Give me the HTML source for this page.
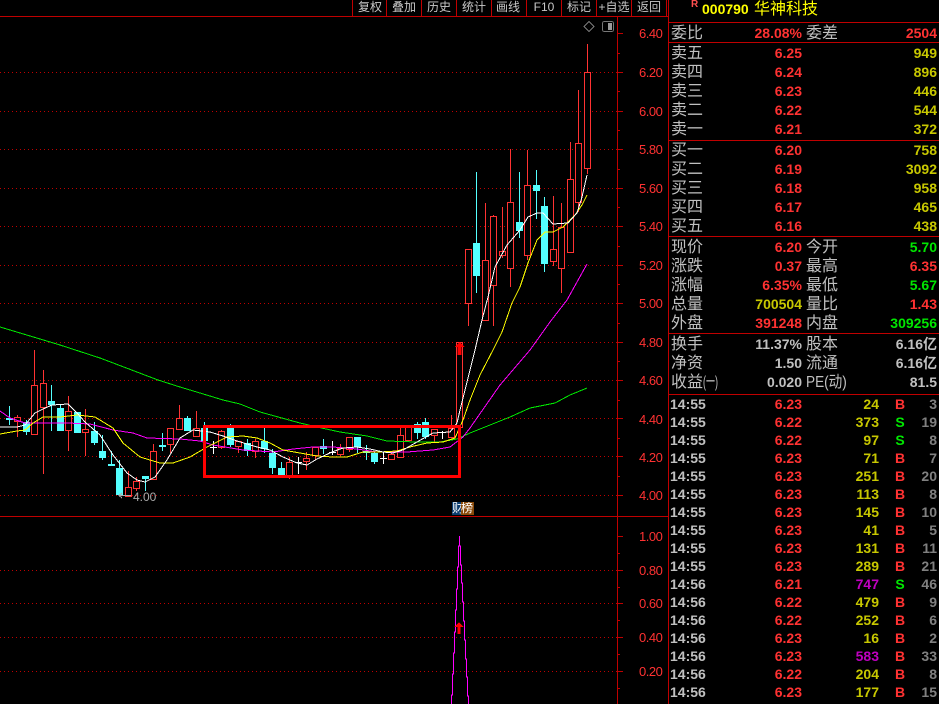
<!DOCTYPE html>
<html><head><meta charset="utf-8">
<style>
html,body{margin:0;padding:0;background:#000}
body{position:relative;width:939px;height:704px;overflow:hidden;font-family:"Liberation Sans","WenQuanYi Zen Hei","Noto Sans CJK SC",sans-serif}
svg{position:absolute;left:0;top:0;shape-rendering:crispEdges}
.t{position:absolute;top:0;height:15px;line-height:14px;font-size:12px;color:#c8c8c8;text-align:center;width:34px;white-space:nowrap}
.ax{position:absolute;left:639px;width:26px;height:14px;line-height:14px;font-size:13px;letter-spacing:-.5px;color:#ff3232}
.r{position:absolute;left:668px;width:271px;height:18px;line-height:18px;font-size:14px;font-weight:bold;color:#ff3232;white-space:nowrap}
.r span{position:absolute;top:0}
.r .l,.r .m{font-size:16px;font-weight:normal;color:#c0c0c0;left:3px;top:1px}
.r .m{left:138px}
.r .p{right:137px}
.r .w{right:2px}
.r .c{right:60px;color:#c8c800}
.r .d{left:225px;width:14px;text-align:center}
.r .n{right:2px;color:#808080}
.r .h{left:2px;color:#c0c0c0}
.r i{font-style:normal;display:inline-block;transform-origin:0 50%}
.g{color:#c0c0c0}.y{color:#c8c800!important}.q{color:#00e600!important}.u{color:#c000c0!important}
</style></head><body>
<svg width="939" height="704" viewBox="0 0 939 704" fill="none">
<g stroke="#c00000" stroke-dasharray="1 3">
<path d="M0 72.5H617M0 111.5H617M0 149.5H617M0 188.5H617M0 226.5H617M0 265.5H617M0 303.5H617M0 342.5H617M0 380.5H617M0 418.5H617M0 456.5H617M0 495.5H617M0 570.5H617M0 603.5H617M0 637.5H617M0 671.5H617"/>
</g>
<g stroke="#c00000">
<path d="M0 16.5H668M0 516.5H668M617.5 17V704M668.5 0V704M668 22.5H939M668 42.5H939M668 140.500H939M668 236.5H939M668 333.5H939M668 394.5H939"/>
<path d="M352.5 0V16M386.5 0V16M421.5 0V16M456.5 0V16M491.5 0V16M526.5 0V16M561.5 0V16M596.5 0V16M631.5 0V16M666.5 0V16"/>
<path d="M618 33.5H623M618 53.5H620M618 72.5H623M618 91.5H620M618 111.5H623M618 130.5H620M618 149.5H623M618 169.5H620M618 188.5H623M618 207.5H620M618 226.5H623M618 246.5H620M618 265.5H623M618 284.5H620M618 303.5H623M618 323.5H620M618 342.5H623M618 361.5H620M618 380.5H623M618 400.5H620M618 418.5H623M618 438.5H620M618 456.5H623M618 476.5H620M618 495.5H623M618 536.5H623M618 553.5H620M618 570.5H623M618 587.5H620M618 603.5H623M618 620.5H620M618 637.5H623M618 654.5H620M618 671.5H623M618 688.5H620"/>
</g>
<path d="M589 21.5l5 5-5 5-5-5z" stroke="#777"/>
<rect x="602.5" y="21.5" width="11" height="10" rx="2" stroke="#777" stroke-width="1"/><rect x="608" y="23" width="4" height="7" fill="#999"/>
<!-- red wicks -->
<path stroke="#ff3232" d="M17.5 415V437M34.5 350V434M43.5 370V474M68.5 396V451M85.5 409V456M128.5 471V496M136.5 477V491M153.5 444V479M170.5 428V453M179.5 405V429M196.5 411V436M221.5 430V449M238.5 441V453M255.5 439V458M289.5 457V479M306.5 452V470M315.5 447V460M340.5 444V456M349.5 437V452M391.5 452V459M400.5 428V457M408.5 427V441M434.5 429V443M451.5 415V437M459.5 342V427M468.5 249V326M485.5 203V320M493.5 215V326M502.5 207V258M510.5 149V287M527.5 150V260M553.5 196V266M561.5 203V293M570.5 142V252M578.5 90V212M587.5 44V174"/>
<!-- red bodies -->
<path stroke="#ff3232" fill="#000" d="M14.5 417.5h6V421.5h-6zM31.5 385.5h6V434.5h-6zM40.5 383.5h6V407.5h-6zM65.5 411.5h6V430.5h-6zM82.5 429.5h6V432.5h-6zM125.5 487.5h6V496.5h-6zM133.5 481.5h6V488.5h-6zM150.5 451.5h6V479.5h-6zM167.5 428.5h6V444.5h-6zM176.5 418.5h6V429.5h-6zM193.5 428.5h6V436.5h-6zM218.5 431.5h6V447.5h-6zM235.5 441.5h6V446.5h-6zM252.5 441.5h6V451.5h-6zM286.5 462.5h6V477.5h-6zM303.5 458.5h6V461.5h-6zM312.5 447.5h6V455.5h-6zM337.5 448.5h6V454.5h-6zM346.5 437.5h6V449.5h-6zM388.5 454.5h6V459.5h-6zM397.5 435.5h6V457.5h-6zM405.5 427.5h6V440.5h-6zM431.5 429.5h6V435.5h-6zM448.5 428.5h6V437.5h-6zM456.5 342.5h6V427.5h-6zM465.5 249.5h6V303.5h-6zM482.5 260.5h6V320.5h-6zM490.5 216.5h6V285.5h-6zM499.5 251.5h6V255.5h-6zM507.5 202.5h6V268.5h-6zM524.5 185.5h6V255.5h-6zM550.5 249.5h6V261.5h-6zM558.5 227.5h6V268.5h-6zM567.5 179.5h6V252.5h-6zM575.5 143.5h6V202.5h-6zM584.5 72.5h6V168.5h-6z"/>
<!-- cyan wicks -->
<path stroke="#54ffff" d="M9.5 406V425M26.5 420V435M51.5 385V431M60.5 405V431M77.5 412V433M94.5 422V445M102.5 435V460M111.5 451V466M119.5 460V495M145.5 476V491M162.5 433V451M187.5 416V431M204.5 422V441M230.5 424V447M247.5 439V456M264.5 428V453M272.5 449V474M281.5 462V475M323.5 439V454M357.5 437V453M366.5 445V460M374.5 452V464M417.5 422V439M425.5 418V439M476.5 172V293M519.5 172V238M536.5 170V219M544.5 197V272"/>
<!-- cyan bodies -->
<g fill="#54ffff">
<rect x="6" y="418" width="7" height="2"/><rect x="23" y="422" width="7" height="10"/><rect x="48" y="401" width="7" height="4"/><rect x="57" y="408" width="7" height="23"/><rect x="74" y="412" width="7" height="21"/><rect x="91" y="431" width="7" height="12"/><rect x="99" y="451" width="7" height="7"/><rect x="108" y="464" width="7" height="2"/><rect x="116" y="468" width="7" height="27"/><rect x="142" y="476" width="7" height="3"/><rect x="159" y="445" width="7" height="2"/><rect x="184" y="418" width="7" height="13"/><rect x="201" y="428" width="7" height="13"/><rect x="227" y="428" width="7" height="17"/><rect x="244" y="443" width="7" height="8"/><rect x="261" y="441" width="7" height="8"/><rect x="269" y="453" width="7" height="15"/><rect x="278" y="468" width="7" height="7"/><rect x="320" y="446" width="7" height="3"/><rect x="354" y="437" width="7" height="10"/><rect x="363" y="451" width="7" height="2"/><rect x="371" y="453" width="7" height="9"/><rect x="414" y="424" width="7" height="9"/><rect x="422" y="422" width="7" height="15"/><rect x="473" y="243" width="7" height="33"/><rect x="516" y="222" width="7" height="9"/><rect x="533" y="185" width="7" height="6"/><rect x="541" y="206" width="7" height="58"/>
</g>
<!-- white doji -->
<path stroke="#fff" d="M213.5 441V454M210 447.5H217M298.5 457V474M295 462.5H302M332.5 441V455M329 452.5H336M383.5 452V464M380 458.5H387M442.5 431V439M439 432.5H446"/>
<!-- MA lines -->
<polyline stroke="#00e600" points="0,327 60,345 100,358 158,380 180,387 200,393 223,400 240,404 260,412 300,423 317,427 340,432 367,436 387,441 417,442 440,442 457,439 470,433 490,425 510,417 530,408 555,403 570,395 587,388"/>
<polyline stroke="#ff00ff" points="0,411 10,418 25,423 43,423 67,423 90,424 113,430 133,433 147,438 180,439 200,441 213,445 243,450 273,452 293,449 313,447 333,447 357,449 377,452 407,452 433,450 450,447 463,437 470,428 500,385 530,350 550,322 567,300 587,264"/>
<polyline stroke="#ffff00" points="0,434 17,431 25,430 33,423 43,417 60,417 77,415 95,417 113,428 123,443 140,457 160,463 173,463 190,457 207,447 227,437 243,436 257,438 270,443 283,450 300,453 317,456 333,457 347,457 363,452 380,452 397,451 410,447 427,443 443,442 455,438 463,420 470,400 480,375 493,350 502,332 512,303 520,287 528,263 537,240 545,232 553,232 563,227 575,215 582,205 587,195"/>
<polyline stroke="#ffffff" points="0,427 17,427 25,425 35,413 43,409 52,405 68,404 77,413 85,422 100,435 113,455 127,473 137,480 145,482 155,477 167,460 180,438 193,430 210,432 223,436 237,441 257,447 270,450 283,457 297,463 307,465 317,459 332,452 343,448 357,447 370,449 383,452 393,453 403,450 417,442 433,433 450,432 457,423 460,410 475,350 482,320 488,297 495,267 507,245 520,230 528,217 537,213 543,213 553,224 568,223 577,213 582,197 587,175"/>
<!-- red box -->
<rect x="204.500" y="426.500" width="255" height="50" stroke="#ff0000" stroke-width="3"/>
<path d="M454.500 347l5-5 5 5h-3v8h-4v-8z" fill="#ff0000"/>
<!-- 4.00 leader -->
<path d="M120 495.500H131M122 493l-3 2.500 3 2.500" stroke="#aaa"/>
<!-- indicator -->
<path stroke="#ff00ff" stroke-width="1" d="M459.500 536V546H458.500V567H457.500V589H456.500V610H455.500V632H454.500V653H453.500V674H452.500V695H451.500V704"/>
<path stroke="#ff00ff" stroke-width="1" d="M459.500 536V546H460.500V565H461.500V583H462.500V602H463.500V621H464.500V640H465.500V659H466.500V677H467.500V696H468.500V704"/>
<path d="M454.500 627l4.500-5 4.500 5h-3v7h-3v-7z" fill="#ff0000"/>
</svg>

<div class="t" style="left:353px">复权</div><div class="t" style="left:387px">叠加</div><div class="t" style="left:422px">历史</div><div class="t" style="left:457px">统计</div><div class="t" style="left:491px">画线</div><div class="t" style="left:527px">F10</div><div class="t" style="left:562px">标记</div><div class="t" style="left:597px">+自选</div><div class="t" style="left:632px">返回</div>

<div class="ax" style="top:27px">6.40</div><div class="ax" style="top:66px">6.20</div><div class="ax" style="top:105px">6.00</div><div class="ax" style="top:143px">5.80</div><div class="ax" style="top:182px">5.60</div><div class="ax" style="top:220px">5.40</div><div class="ax" style="top:259px">5.20</div><div class="ax" style="top:297px">5.00</div><div class="ax" style="top:336px">4.80</div><div class="ax" style="top:374px">4.60</div><div class="ax" style="top:413px">4.40</div><div class="ax" style="top:451px">4.20</div><div class="ax" style="top:489px">4.00</div>
<div class="ax" style="top:530px">1.00</div><div class="ax" style="top:564px">0.80</div><div class="ax" style="top:597px">0.60</div><div class="ax" style="top:631px">0.40</div><div class="ax" style="top:665px">0.20</div>

<div style="position:absolute;left:133px;top:490px;font-size:12px;line-height:14px;color:#aaa">4.00</div>

<div style="position:absolute;left:452px;top:502px;width:9px;height:13px;background:#0a3c6e;color:#fff;font-size:12px;line-height:13px;overflow:hidden">财</div>
<div style="position:absolute;left:461px;top:502px;width:13px;height:13px;background:#8a4a0a;color:#fff;font-size:12px;line-height:13px;overflow:hidden">榜</div>

<div style="position:absolute;left:691px;top:0;font-size:10px;line-height:10px;font-weight:bold;color:#ff5050">R</div>
<div style="position:absolute;left:702px;top:0;font-size:14px;line-height:18px;font-weight:bold;color:#ffff00">000790</div>
<div style="position:absolute;left:754px;top:0;font-size:16px;line-height:19px;color:#ffff00">华神科技</div>

<div class="r" style="top:24px"><span class="l">委比</span><span class="p">28.08%</span><span class="m">委差</span><span class="w">2504</span></div>
<div class="r" style="top:44px"><span class="l">卖五</span><span class="p">6.25</span><span class="w y">949</span></div>
<div class="r" style="top:63px"><span class="l">卖四</span><span class="p">6.24</span><span class="w y">896</span></div>
<div class="r" style="top:82px"><span class="l">卖三</span><span class="p">6.23</span><span class="w y">446</span></div>
<div class="r" style="top:101px"><span class="l">卖二</span><span class="p">6.22</span><span class="w y">544</span></div>
<div class="r" style="top:120px"><span class="l">卖一</span><span class="p">6.21</span><span class="w y">372</span></div>
<div class="r" style="top:141px"><span class="l">买一</span><span class="p">6.20</span><span class="w y">758</span></div>
<div class="r" style="top:160px"><span class="l">买二</span><span class="p">6.19</span><span class="w y">3092</span></div>
<div class="r" style="top:179px"><span class="l">买三</span><span class="p">6.18</span><span class="w y">958</span></div>
<div class="r" style="top:198px"><span class="l">买四</span><span class="p">6.17</span><span class="w y">465</span></div>
<div class="r" style="top:217px"><span class="l">买五</span><span class="p">6.16</span><span class="w y">438</span></div>
<div class="r" style="top:238px"><span class="l">现价</span><span class="p">6.20</span><span class="m">今开</span><span class="w q">5.70</span></div>
<div class="r" style="top:257px"><span class="l">涨跌</span><span class="p">0.37</span><span class="m">最高</span><span class="w">6.35</span></div>
<div class="r" style="top:276px"><span class="l">涨幅</span><span class="p">6.35%</span><span class="m">最低</span><span class="w q">5.67</span></div>
<div class="r" style="top:295px"><span class="l">总量</span><span class="p y">700504</span><span class="m">量比</span><span class="w">1.43</span></div>
<div class="r" style="top:314px"><span class="l">外盘</span><span class="p">391248</span><span class="m">内盘</span><span class="w q">309256</span></div>
<div class="r" style="top:335px"><span class="l">换手</span><span class="p g">11.37%</span><span class="m">股本</span><span class="w g">6.16亿</span></div>
<div class="r" style="top:354px"><span class="l">净资</span><span class="p g">1.50</span><span class="m">流通</span><span class="w g">6.16亿</span></div>
<div class="r" style="top:373px"><span class="l">收益<i style="transform:scaleX(.56)">(一)</i></span><span class="p g">0.020</span><span class="m"><i style="transform:scaleX(.85)">PE(动)</i></span><span class="w g">81.5</span></div>

<div class="r" style="top:395px"><span class="h">14:55</span><span class="p">6.23</span><span class="c">24</span><span class="d">B</span><span class="n">3</span></div>
<div class="r" style="top:413px"><span class="h">14:55</span><span class="p">6.22</span><span class="c">373</span><span class="d q">S</span><span class="n">19</span></div>
<div class="r" style="top:431px"><span class="h">14:55</span><span class="p">6.22</span><span class="c">97</span><span class="d q">S</span><span class="n">8</span></div>
<div class="r" style="top:449px"><span class="h">14:55</span><span class="p">6.23</span><span class="c">71</span><span class="d">B</span><span class="n">7</span></div>
<div class="r" style="top:467px"><span class="h">14:55</span><span class="p">6.23</span><span class="c">251</span><span class="d">B</span><span class="n">20</span></div>
<div class="r" style="top:485px"><span class="h">14:55</span><span class="p">6.23</span><span class="c">113</span><span class="d">B</span><span class="n">8</span></div>
<div class="r" style="top:503px"><span class="h">14:55</span><span class="p">6.23</span><span class="c">145</span><span class="d">B</span><span class="n">10</span></div>
<div class="r" style="top:521px"><span class="h">14:55</span><span class="p">6.23</span><span class="c">41</span><span class="d">B</span><span class="n">5</span></div>
<div class="r" style="top:539px"><span class="h">14:55</span><span class="p">6.23</span><span class="c">131</span><span class="d">B</span><span class="n">11</span></div>
<div class="r" style="top:557px"><span class="h">14:55</span><span class="p">6.23</span><span class="c">289</span><span class="d">B</span><span class="n">21</span></div>
<div class="r" style="top:575px"><span class="h">14:56</span><span class="p">6.21</span><span class="c u">747</span><span class="d q">S</span><span class="n">46</span></div>
<div class="r" style="top:593px"><span class="h">14:56</span><span class="p">6.22</span><span class="c">479</span><span class="d">B</span><span class="n">9</span></div>
<div class="r" style="top:611px"><span class="h">14:56</span><span class="p">6.22</span><span class="c">252</span><span class="d">B</span><span class="n">6</span></div>
<div class="r" style="top:629px"><span class="h">14:56</span><span class="p">6.23</span><span class="c">16</span><span class="d">B</span><span class="n">2</span></div>
<div class="r" style="top:647px"><span class="h">14:56</span><span class="p">6.23</span><span class="c u">583</span><span class="d">B</span><span class="n">33</span></div>
<div class="r" style="top:665px"><span class="h">14:56</span><span class="p">6.22</span><span class="c">204</span><span class="d">B</span><span class="n">8</span></div>
<div class="r" style="top:683px"><span class="h">14:56</span><span class="p">6.23</span><span class="c">177</span><span class="d">B</span><span class="n">15</span></div>
</body></html>
